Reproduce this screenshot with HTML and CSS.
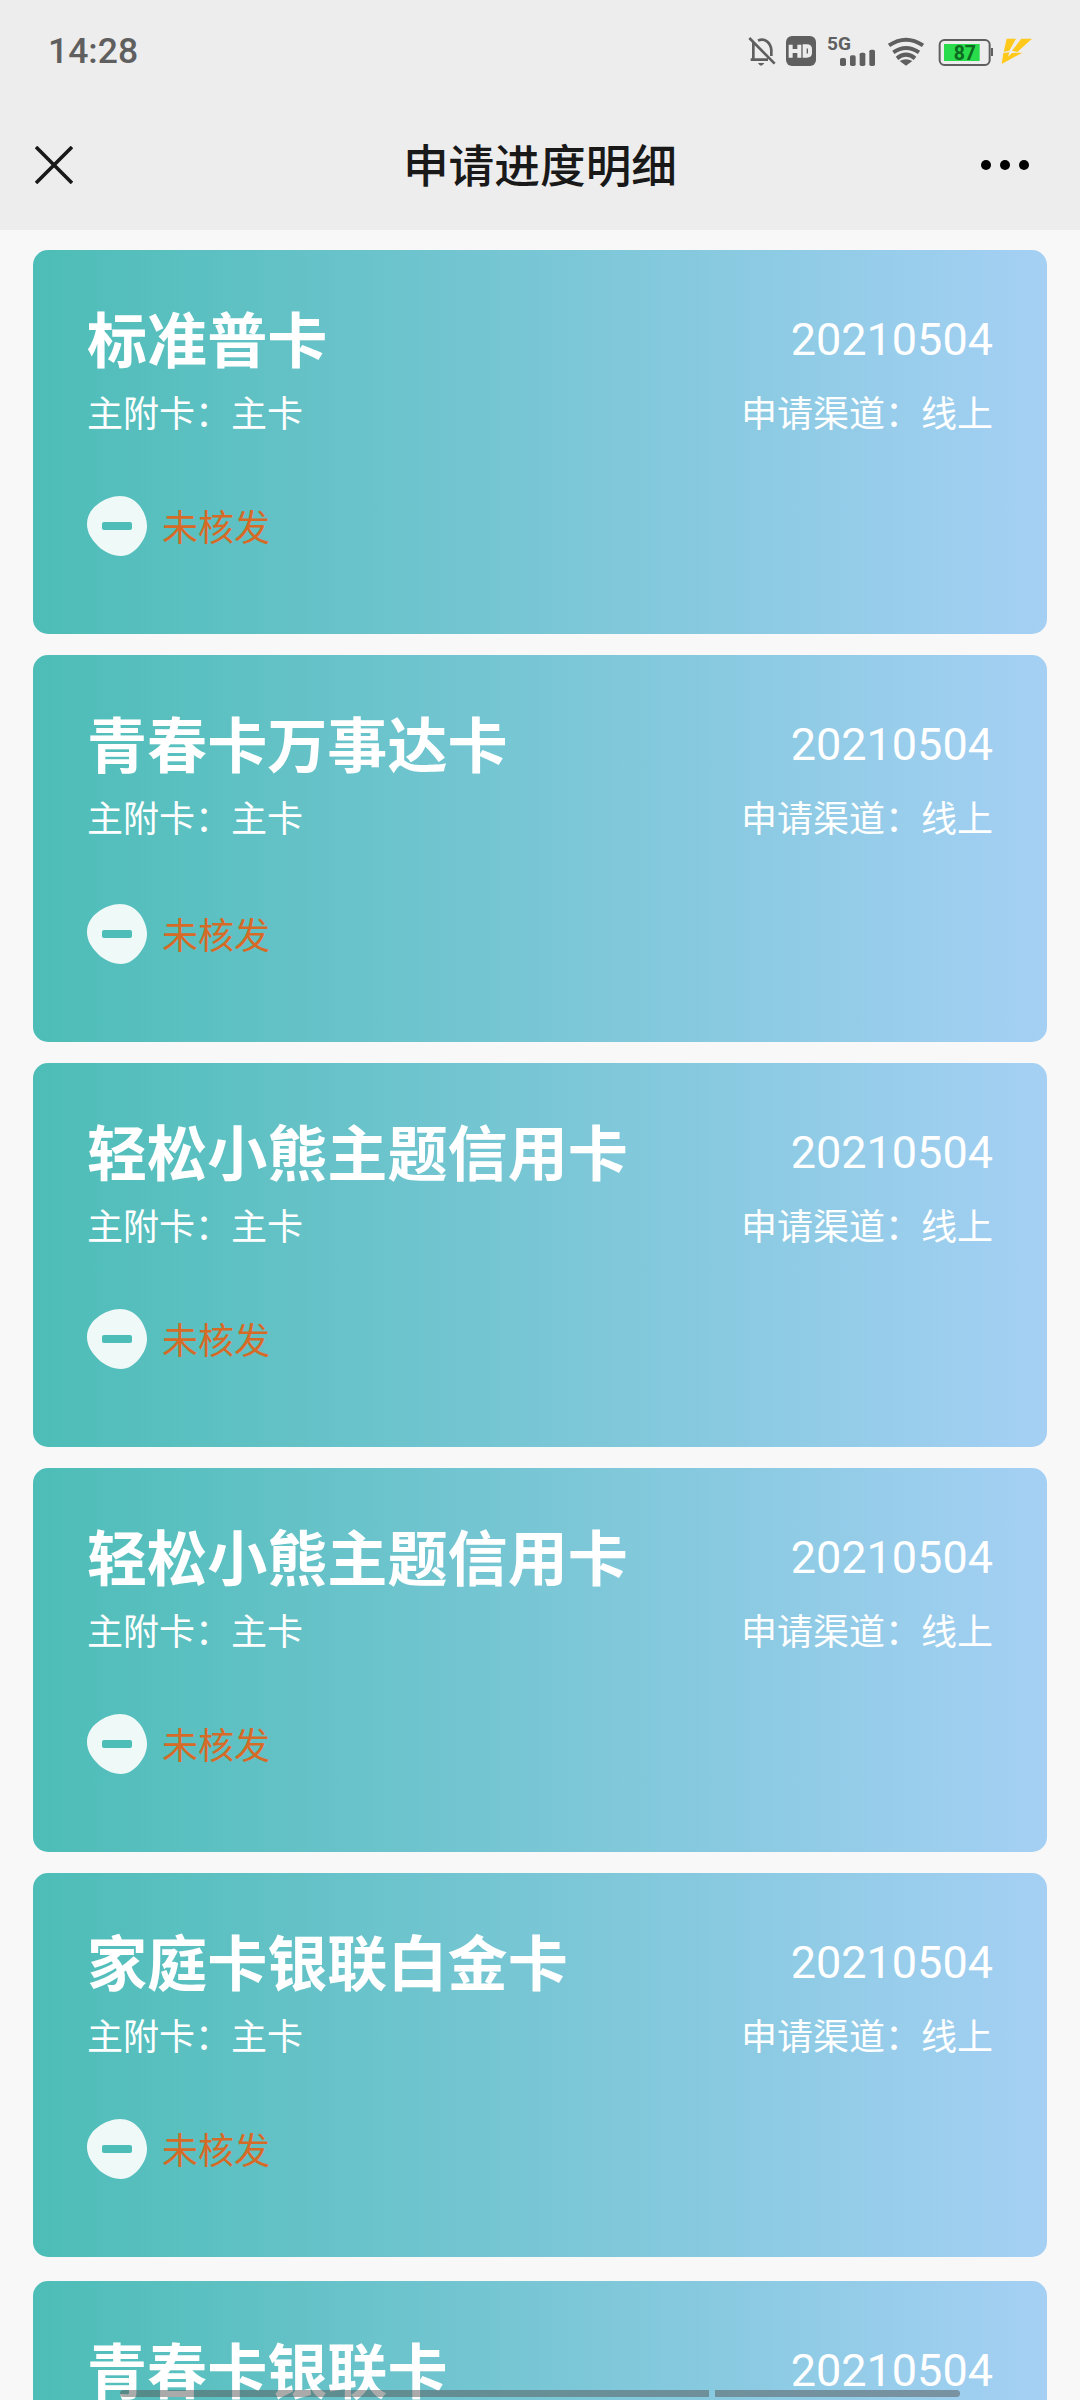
FILE: index.html
```html
<!DOCTYPE html>
<html lang="zh-CN">
<head>
<meta charset="utf-8">
<title>申请进度明细</title>
<link rel="stylesheet" href="styles.css">
</head>
<body>
<svg class="defs" width="0" height="0">
  <symbol id="minus" viewBox="0 0 60 60"><path fill="#eef9f8" d="M33 0C40 0 47 3 52 9C57 15 60 23 60 30C60 37 57 44 52 50C47 56 41 60 34 60C26 60 17 56 11 50C4 43 0 36 0 28C0 20 4 13 11 8C17 3 26 0 33 0Z"/><rect x="15" y="26" width="30" height="8" rx="2" fill="#4dbdb8"/></symbol>
</svg>
<header class="top">
  <div class="status">
    <span class="time">14:28</span>
    <svg class="icons" width="320" height="60" viewBox="0 0 960 180">
      <g fill="none" stroke="#5f5f5f" stroke-width="8">
        <path d="M58 54L134 131M70 68V116M62 119H114M84 62C104 52 122 68 124 90V108"/>
      </g>
      <path fill="#5f5f5f" d="M84 129H103Q93 145 84 129Z"/>
      <rect x="168" y="48" width="90" height="90" rx="18" fill="#5f5f5f"/>
      <path fill="none" stroke="#ececec" stroke-width="12" d="M182 74V113M208 74V113M182 93H208M224 79H230Q240 79 240 87V99Q240 107 230 107H224Z"/>
      <text x="291" y="89" class="net" textLength="72" lengthAdjust="spacingAndGlyphs">5G</text>
      <g fill="#5f5f5f"><rect x="330" y="114" width="18" height="24" rx="5"/><rect x="360" y="106" width="17" height="32" rx="5"/><rect x="389" y="98" width="17" height="40" rx="5"/><rect x="418" y="89" width="17" height="49" rx="5"/>
      <path d="M509 123Q528 113 547 123L528 137Z"/></g>
      <g fill="none" stroke="#5f5f5f" stroke-width="12"><path d="M477 76Q528 42 579 76M490 97Q528 71 567 97M501 115Q528 93 555 115"/></g>
      <rect x="629" y="60" width="150" height="75" rx="14" fill="none" stroke="#5f5f5f" stroke-width="6"/>
      <path d="M786 84V108" stroke="#5f5f5f" stroke-width="6"/>
      <rect x="642" y="72" width="107" height="51" fill="#29dc4b"/>
      <text x="671" y="121" class="level" textLength="67" lengthAdjust="spacingAndGlyphs">87</text>
      <g fill="#ffc91c"><path d="M830 56H858L838 92L821 95Z"/><path d="M874 56H906L862 96L846 92Z"/><path d="M820 99L838 97L834 110L846 99L877 98L815 132Z"/></g>
    </svg>
  </div>
  <nav class="nav">
    <svg width="38" height="38" viewBox="0 0 38 38"><path d="M1 1L37 37M37 1L1 37" stroke="#191919" stroke-width="3.6"/></svg>
    <h1>申请进度明细</h1>
    <svg class="more" width="50" height="12" viewBox="0 0 50 12"><circle cx="6" cy="6" r="5"/><circle cx="25" cy="6" r="5"/><circle cx="44" cy="6" r="5"/></svg>
  </nav>
</header>
<main class="list">
  <article class="card">
    <div class="row"><h2>标准普卡</h2><span class="date">20210504</span></div>
    <div class="row sub"><span>主附卡：主卡</span><span>申请渠道：线上</span></div>
    <div class="state"><svg width="60" height="60"><use href="#minus"/></svg><span>未核发</span></div>
  </article>
  <article class="card tall">
    <div class="row"><h2>青春卡万事达卡</h2><span class="date">20210504</span></div>
    <div class="row sub"><span>主附卡：主卡</span><span>申请渠道：线上</span></div>
    <div class="state"><svg width="60" height="60"><use href="#minus"/></svg><span>未核发</span></div>
  </article>
  <article class="card">
    <div class="row"><h2>轻松小熊主题信用卡</h2><span class="date">20210504</span></div>
    <div class="row sub"><span>主附卡：主卡</span><span>申请渠道：线上</span></div>
    <div class="state"><svg width="60" height="60"><use href="#minus"/></svg><span>未核发</span></div>
  </article>
  <article class="card">
    <div class="row"><h2>轻松小熊主题信用卡</h2><span class="date">20210504</span></div>
    <div class="row sub"><span>主附卡：主卡</span><span>申请渠道：线上</span></div>
    <div class="state"><svg width="60" height="60"><use href="#minus"/></svg><span>未核发</span></div>
  </article>
  <article class="card last-full">
    <div class="row"><h2>家庭卡银联白金卡</h2><span class="date">20210504</span></div>
    <div class="row sub"><span>主附卡：主卡</span><span>申请渠道：线上</span></div>
    <div class="state"><svg width="60" height="60"><use href="#minus"/></svg><span>未核发</span></div>
  </article>
  <article class="card partial">
    <div class="row"><h2>青春卡银联卡</h2><span class="date">20210504</span></div>
  </article>
</main>
<div class="gesture"><i></i><i></i></div>
</body>
</html>
```
FILE: styles.css
```css
* { box-sizing: border-box; }
body { margin: 0; height: 2400px; overflow: hidden; background: #f8f8f8; font-family: Roboto, "Noto Sans CJK SC", sans-serif; position: relative; }
.defs { display: block; }
h1, h2 { margin: 0; }
.top { height: 230px; background: #ededed; }
.status { height: 100px; padding: 20px 30px 0 48px; display: flex; justify-content: space-between; }
.time { font-size: 35.5px; font-weight: 500; line-height: 62px; color: #5f5f5f; }
.icons { display: block; }
.net { font: 700 54px Roboto, sans-serif; fill: #5f5f5f; }
.level { font: 700 62px Roboto, sans-serif; fill: #0d6a20; }
.nav { height: 129px; padding: 0 50px 0 35px; display: grid; grid-template-columns: 38px 1fr 50px; align-items: center; }
.nav h1 { padding: 6px 0 0 27px; text-align: center; font-size: 45.7px; font-weight: 500; line-height: 60px; color: #191919; }
.list { padding: 20px 33px 0; display: flex; flex-direction: column; gap: 21px; }
.card { height: 384px; flex: none; padding: 54px 54px 0; border-radius: 15px; color: #fff; background: linear-gradient(90deg, #4dbdb7, #a5d0f4); }
.tall { height: 387px; }
.last-full { margin-bottom: 3px; }
.partial { height: 119px; border-radius: 15px 15px 0 0; }
.row { display: flex; justify-content: space-between; align-items: center; height: 72px; }
.row h2 { padding-top: 6px; font-size: 60.1px; font-weight: 700; line-height: 74px; }
.date { font-size: 45px; line-height: 70px; }
.sub { height: 70px; font-size: 36px; }
.state { display: flex; align-items: center; gap: 15px; height: 60px; margin-top: 50px; font-size: 36px; line-height: 58px; color: #d66b28; }
.state span { padding-top: 5px; }
.tall .state { margin-top: 53px; }
.gesture { position: absolute; left: 120px; top: 2390px; display: flex; gap: 6px; }
.gesture i { width: 589px; height: 7px; border-radius: 4px 0 0 4px; background: rgba(85, 85, 85, .5); }
.gesture i + i { width: 245px; border-radius: 0 4px 4px 0; }
```
